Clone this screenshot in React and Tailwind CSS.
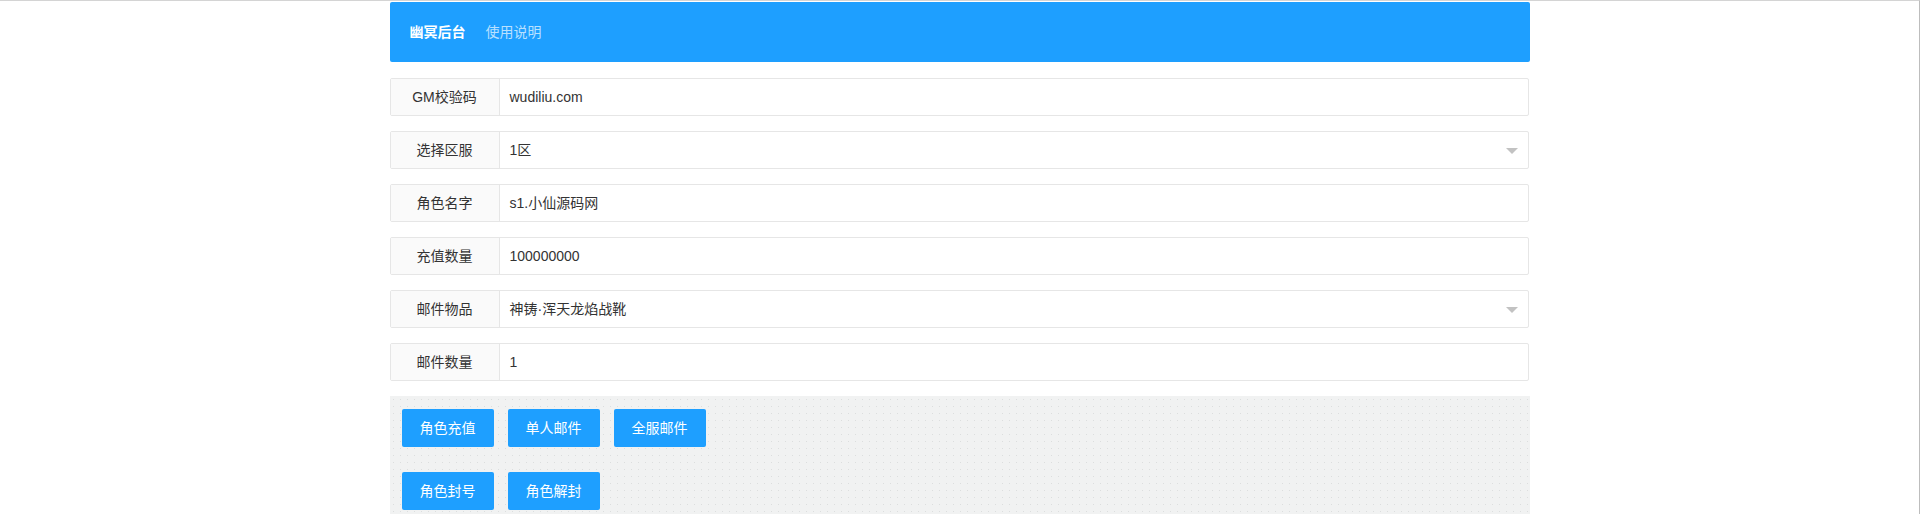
import React from "react";

const fields = [
  { label: "GM校验码", value: "wudiliu.com" },
  { label: "选择区服", value: "1区", select: true },
  { label: "角色名字", value: "s1.小仙源码网" },
  { label: "充值数量", value: "100000000" },
  { label: "邮件物品", value: "神铸·浑天龙焰战靴", select: true },
  { label: "邮件数量", value: "1" },
];

const buttonRows = [
  ["角色充值", "单人邮件", "全服邮件"],
  ["角色封号", "角色解封"],
];

function FieldRow({ label, value, select }) {
  return (
    <div className="flex h-[38px] rounded-[2px] border border-[#e6e6e6] bg-white">
      <div className="flex w-[109px] shrink-0 items-center justify-center border-r border-[#e6e6e6] bg-[#fafafa] text-[14px] text-[#333]">
        {label}
      </div>
      <div className="relative flex flex-1 items-center pl-[10px] text-[14px] text-[#333]">
        {value}
        {select && (
          <span className="absolute right-[10px] top-1/2 -mt-[2px] h-0 w-0 border-x-[6px] border-t-[6px] border-x-transparent border-t-[#c2c2c2]" />
        )}
      </div>
    </div>
  );
}

export default function App() {
  return (
    <div
      className="h-screen overflow-hidden border-t border-r border-t-[#d4d4d4] border-r-[#bdbdbd] bg-white"
      style={{ fontFamily: '"Liberation Sans", "Noto Sans CJK SC", sans-serif' }}
    >
      <div className="mx-auto mt-[1px] w-[1140px]">
        {/* top nav */}
        <div className="flex h-[60px] items-center gap-[20px] rounded-[2px] bg-[#1e9fff] px-[20px] text-[14px]">
          <span className="font-bold text-white">幽冥后台</span>
          <span className="text-white/70">使用说明</span>
        </div>

        {/* form */}
        <div className="mt-[16px] flex w-[1139px] flex-col gap-[15px]">
          {fields.map((f) => (
            <FieldRow key={f.label} {...f} />
          ))}
        </div>

        {/* actions */}
        <div className="mt-[15px] flex flex-col gap-[25px] bg-[#f1f2f2] bg-[radial-gradient(circle,#dcdede_0.7px,transparent_1px)] bg-size-[7px_7px] px-[12px] pt-[13px] pb-[30px]">
          {buttonRows.map((row, i) => (
            <div key={i} className="flex gap-[14px]">
              {row.map((b) => (
                <button
                  key={b}
                  className="flex h-[38px] w-[92px] items-center justify-center rounded-[2px] bg-[#1e9fff] text-[14px] text-white"
                >
                  {b}
                </button>
              ))}
            </div>
          ))}
        </div>
      </div>
    </div>
  );
}
